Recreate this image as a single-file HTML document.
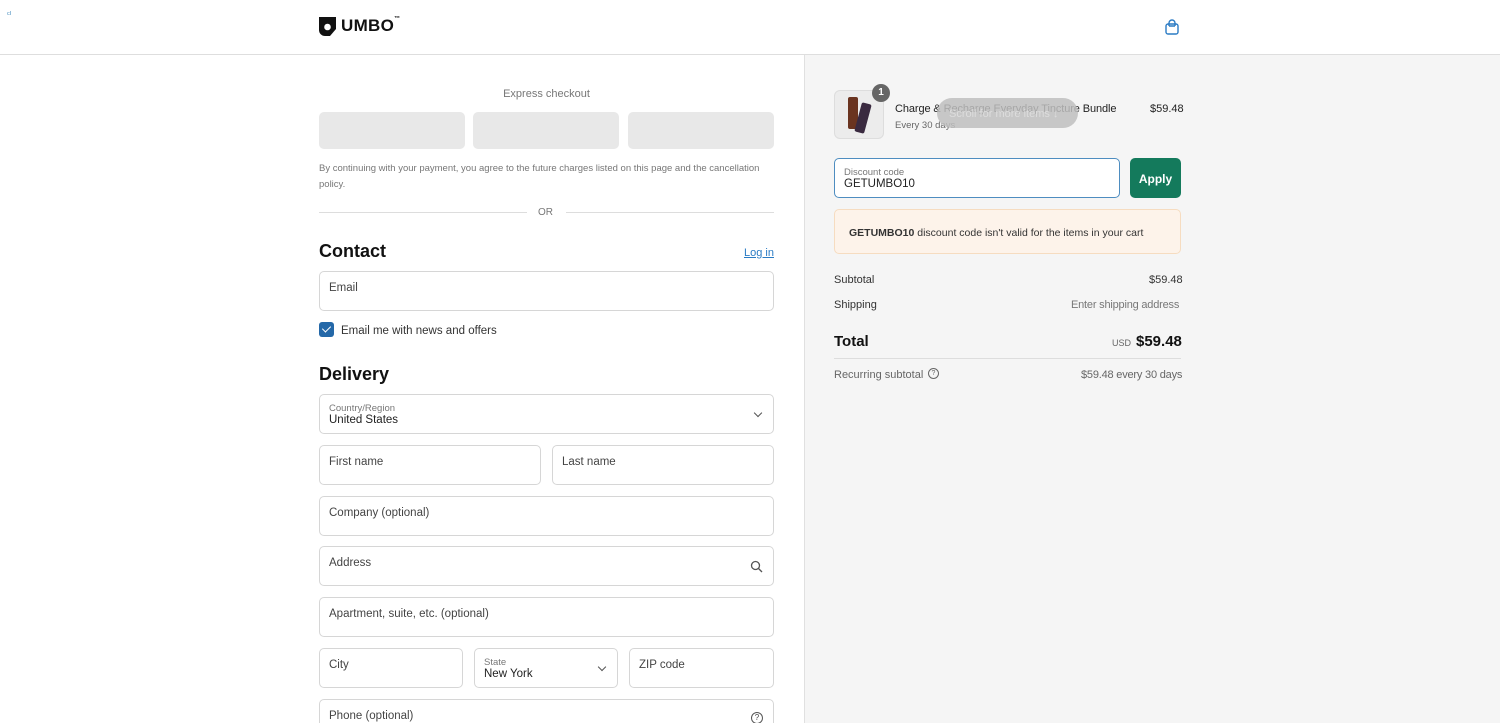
<!DOCTYPE html>
<html><head><meta charset="utf-8"><style>
*{box-sizing:border-box;margin:0;padding:0}
html,body{width:1500px;height:723px;overflow:hidden}
body{font-family:"Liberation Sans",sans-serif;background:#fff;color:#333;position:relative;font-size:14px}
.abs{position:absolute}
.hdr{left:0;top:0;width:1500px;height:55px;border-bottom:1px solid #dedede;background:#fff}
.right{left:804px;top:55px;width:696px;height:668px;background:#f5f5f5;border-left:1px solid #e0e0e0}
.fld{position:absolute;border:1px solid #d6d6d6;border-radius:5px;background:#fff;height:40px;padding-left:9px;font-size:11.5px;color:#444;line-height:32px}
.btn{position:absolute;top:112px;width:146px;height:37px;border-radius:5px;background:#e8e8e8}
h2{position:absolute;font-size:18px;font-weight:bold;color:#111}
.small{font-size:9.5px;color:#777;line-height:10px}
.val{font-size:11.5px;color:#222;line-height:13px}
.chev{position:absolute;right:12px;top:15px;width:6px;height:6px;border-right:1.3px solid #555;border-bottom:1.3px solid #555;transform:rotate(45deg)}
.r{font-size:11px}
</style></head><body>
<div class="abs hdr"></div>
<div class="abs" style="left:7px;top:10px;font-size:8px;color:#4a8fbf">ᶜᴵ</div>
<svg class="abs" style="left:319px;top:17px" width="17" height="19" viewBox="0 0 17 19"><path d="M0 0h17v12l-6 7H6a6 6 0 0 1-6-6z" fill="#111"/><circle cx="8.5" cy="10" r="3.3" fill="#fff"/></svg>
<div class="abs" style="left:341px;top:16px;font-size:17px;font-weight:bold;color:#111;letter-spacing:0.3px">UMBO<span style="font-size:6px;vertical-align:top">™</span></div>
<svg class="abs" style="left:1164px;top:19px" width="16" height="16" viewBox="0 0 16 16" fill="none" stroke="#2a7bc4" stroke-width="1.4"><rect x="2" y="5" width="12" height="10" rx="2"/><path d="M5 7V4a3 3 0 0 1 6 0v3M5 7h6"/></svg>
<div class="abs right"></div>

<div class="abs" style="left:319px;top:88px;width:455px;text-align:center;font-size:11px;color:#777">Express checkout</div>
<div class="btn" style="left:319px"></div><div class="btn" style="left:473px"></div><div class="btn" style="left:628px"></div>
<div class="abs" style="left:319px;top:161px;width:455px;font-size:9.5px;color:#777;line-height:16px">By continuing with your payment, you agree to the future charges listed on this page and the cancellation policy.</div>
<div class="abs" style="left:319px;top:212px;width:208px;height:1px;background:#ddd"></div>
<div class="abs" style="left:566px;top:212px;width:208px;height:1px;background:#ddd"></div>
<div class="abs" style="left:538px;top:207px;font-size:10px;color:#777">OR</div>
<h2 style="left:319px;top:241px">Contact</h2>
<div class="abs" style="left:744px;top:247px;font-size:11px;color:#2a7bc4;text-decoration:underline">Log in</div>
<div class="fld" style="left:319px;top:271px;width:455px">Email</div>
<div class="abs" style="left:319px;top:322px;width:15px;height:15px;border-radius:3px;background:#2468a8"></div>
<div class="abs" style="left:324px;top:324px;width:5px;height:8px;border-right:1.5px solid #fff;border-bottom:1.5px solid #fff;transform:rotate(45deg)"></div>
<div class="abs" style="left:341px;top:325px;font-size:11.5px;color:#333">Email me with news and offers</div>
<h2 style="left:319px;top:364px">Delivery</h2>
<div class="fld" style="left:319px;top:394px;width:455px;line-height:normal;padding-top:9px"><div class="small">Country/Region</div><div class="val">United States</div><div class="chev"></div></div>
<div class="fld" style="left:319px;top:445px;width:222px">First name</div>
<div class="fld" style="left:552px;top:445px;width:222px">Last name</div>
<div class="fld" style="left:319px;top:496px;width:455px">Company (optional)</div>
<div class="fld" style="left:319px;top:546px;width:455px">Address<svg style="position:absolute;right:10px;top:13px" width="13" height="13" viewBox="0 0 13 13" fill="none" stroke="#555" stroke-width="1.3"><circle cx="5.5" cy="5.5" r="4"/><path d="M8.5 8.5l3.5 3.5"/></svg></div>
<div class="fld" style="left:319px;top:597px;width:455px">Apartment, suite, etc. (optional)</div>
<div class="fld" style="left:319px;top:648px;width:144px">City</div>
<div class="fld" style="left:474px;top:648px;width:144px;line-height:normal;padding-top:9px"><div class="small">State</div><div class="val">New York</div><div class="chev"></div></div>
<div class="fld" style="left:629px;top:648px;width:145px">ZIP code</div>
<div class="fld" style="left:319px;top:699px;width:455px">Phone (optional)<div style="position:absolute;right:10px;top:12px;width:12px;height:12px;border:1.2px solid #555;border-radius:50%;font-size:8px;line-height:10px;text-align:center">?</div></div>

<div class="abs" style="left:834px;top:90px;width:50px;height:49px;border:1px solid #ddd;border-radius:6px;background:#ececec"></div>
<div class="abs" style="left:848px;top:97px;width:10px;height:32px;background:#6a3420;border-radius:2px"></div>
<div class="abs" style="left:858px;top:103px;width:10px;height:30px;background:#3a2a40;border-radius:2px;transform:rotate(15deg)"></div>
<div class="abs" style="left:872px;top:84px;width:18px;height:18px;border-radius:50%;background:#666;color:#fff;font-size:10px;text-align:center;line-height:18px;font-weight:bold">1</div>
<div class="abs" style="left:895px;top:103px;font-size:11px;color:#222;letter-spacing:-0.1px">Charge &amp; Recharge Everyday Tincture Bundle</div>
<div class="abs" style="left:895px;top:120px;font-size:9.5px;color:#666">Every 30 days</div>
<div class="abs" style="left:937px;top:98px;width:141px;height:30px;border-radius:15px;background:rgba(190,190,190,0.85);color:#ddd;font-size:11px;line-height:32px;padding-left:12px">Scroll for more items ↓</div>
<div class="abs r" style="left:1150px;top:103px;color:#222">$59.48</div>
<div class="abs" style="left:834px;top:158px;width:286px;height:40px;border:1.5px solid #4e8dc0;border-radius:5px;background:#fff;padding:9px 0 0 9px"><div class="small">Discount code</div><div class="val">GETUMBO10</div></div>
<div class="abs" style="left:1130px;top:158px;width:51px;height:40px;border-radius:5px;background:#147a5c;color:#fff;font-weight:bold;font-size:12px;text-align:center;line-height:42px">Apply</div>
<div class="abs" style="left:834px;top:209px;width:347px;height:45px;border:1px solid #f6dcc0;border-radius:5px;background:#fdf3ea;font-size:10.5px;color:#333;line-height:47px;padding-left:14px"><b>GETUMBO10</b> discount code isn't valid for the items in your cart</div>
<div class="abs r" style="left:834px;top:274px">Subtotal</div>
<div class="abs r" style="left:1149px;top:274px">$59.48</div>
<div class="abs r" style="left:834px;top:299px">Shipping</div>
<div class="abs r" style="left:1071px;top:299px;color:#777;letter-spacing:-0.2px">Enter shipping address</div>
<div class="abs" style="left:834px;top:333px;font-size:15px;font-weight:bold;color:#111">Total</div>
<div class="abs" style="left:1112px;top:338px;font-size:9px;color:#666">USD</div>
<div class="abs" style="left:1136px;top:333px;font-size:15px;font-weight:bold;color:#111">$59.48</div>
<div class="abs" style="left:834px;top:358px;width:347px;height:1px;background:#ddd"></div>
<div class="abs r" style="left:834px;top:369px;color:#666">Recurring subtotal</div>
<div class="abs" style="left:928px;top:368px;width:11px;height:11px;border:1.2px solid #666;border-radius:50%;font-size:7px;line-height:9px;text-align:center;color:#666">?</div>
<div class="abs r" style="left:1081px;top:369px;color:#666;letter-spacing:-0.2px">$59.48 every 30 days</div>
</body></html>
